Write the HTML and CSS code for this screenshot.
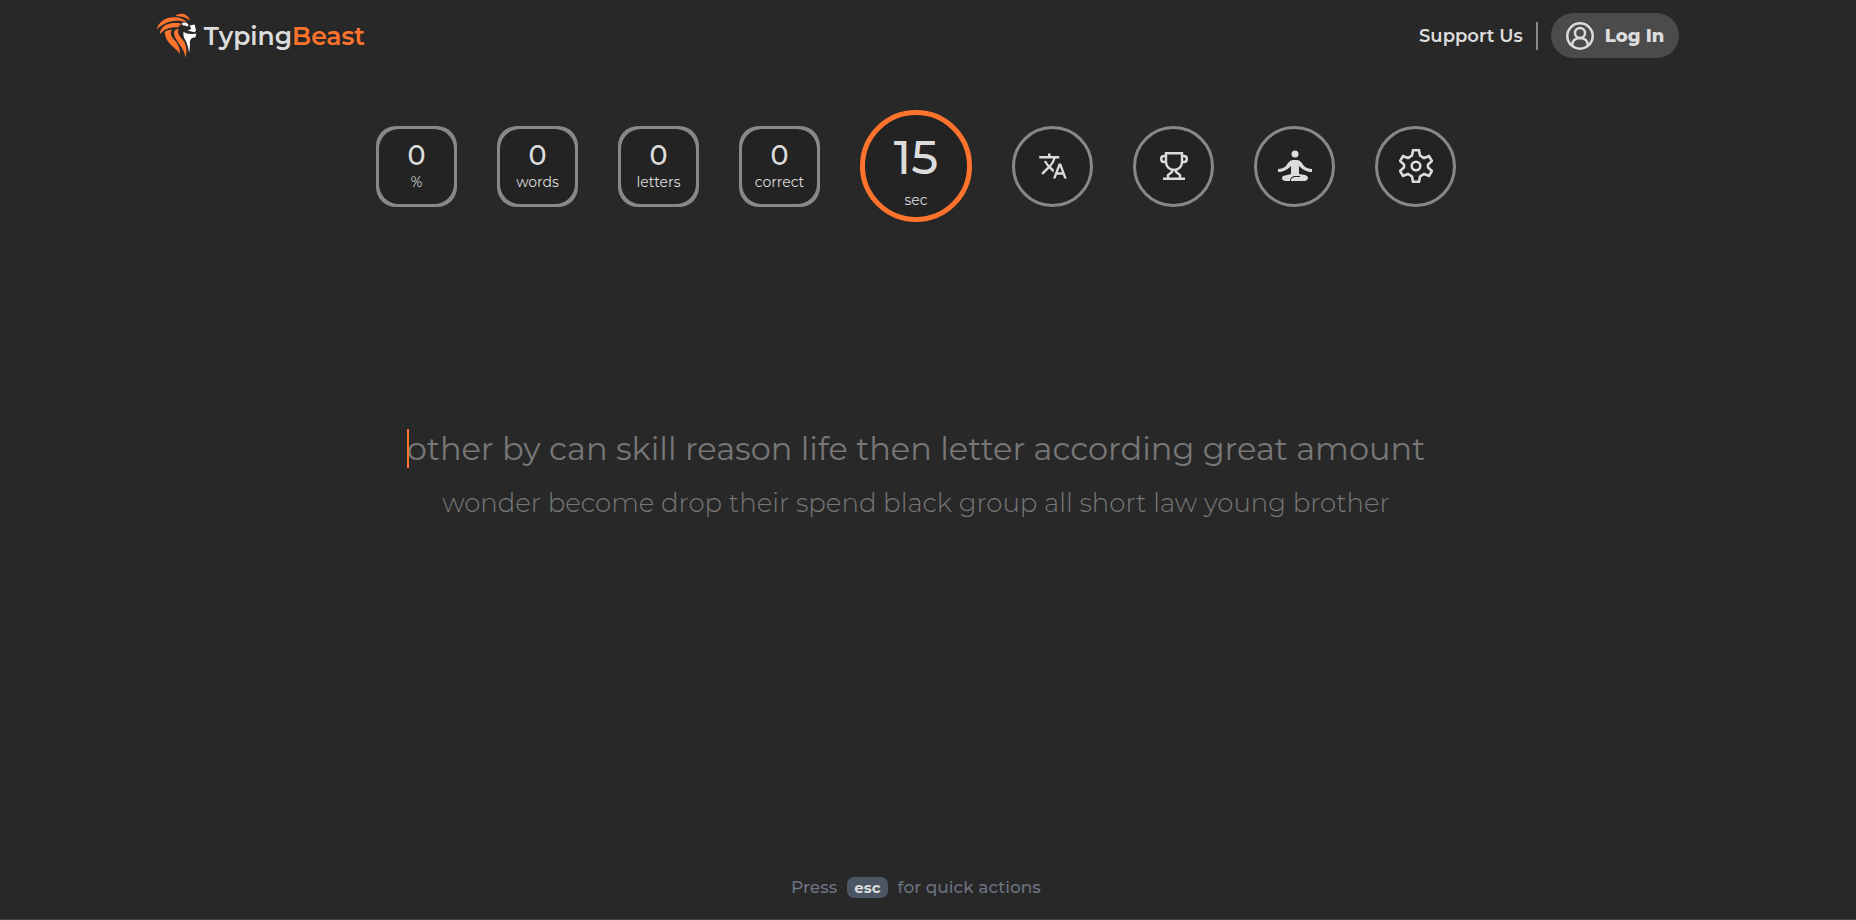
FILE: index.html
```html
<!DOCTYPE html>
<html lang="en">

<head>
  <meta charset="UTF-8">
  <meta name="viewport" content="width=device-width, initial-scale=1">
  <title>TypingBeast</title>
  <link rel="stylesheet" href="styles.css">
</head>

<body>

  <header class="header">
    <a class="logo" href="#">
      <svg class="logo-icon" viewBox="16 18 122 136" aria-hidden="true">
        <g fill="#ff732d">
          <path d="M73 28C86 17 110 18 117 42C105 32 91 28 73 28Z"/>
          <path d="M18 68C25 43 49 29 75 32C91 33 102 39 107 47C83 38 47 39 18 68Z"/>
          <path d="M27 82C29 61 47 50 68 49C78 48 87 48 94 52C88 53 84 57 82 62C60 60 44 65 27 82Z"/>
          <path d="M42 76C48 70 56 68 64 69C57 76 60 86 67 95C77 107 88 116 87 142C80 122 45 114 42 76Z"/>
          <path d="M69 76C72 70 77 67 83 66C79 76 83 84 91 94C103 106 111 122 104 153C102 122 71 104 69 76Z"/>
        </g>
        <g fill="#fff">
          <path d="M94 48L106 47L113 54L109 60C105 56 99 59 94 54Z"/>
          <path d="M116 56L131 53L135 71L131 76L121 74L110 71L121 67Z"/>
          <path d="M98 75C107 82 119 83 136 80L133 92C122 91 115 98 117 112L115 138C112 125 110 112 105 103C101 96 96 88 98 75Z"/>
        </g>
      </svg>
      <span class="logo-text">Typing<span class="accent">Beast</span></span>
    </a>

    <nav class="nav">
      <a class="support" href="#">Support Us</a>
      <span class="divider"></span>
      <button class="login" type="button">
        <svg class="login-icon" viewBox="0 0 28 28" fill="none" stroke="currentColor" stroke-width="2.500" aria-hidden="true">
          <circle cx="14" cy="14" r="12.700"/>
          <circle cx="14" cy="11" r="5"/>
          <path d="M6 24C6 19 9 16 14 16S22 19 22 24"/>
        </svg>
        Log In
      </button>
    </nav>
  </header>

  <main class="main">
    <section class="toolbar">
      <div class="stat"><div class="stat-box"><span class="value">0</span><span class="label">%</span></div></div>
      <div class="stat"><div class="stat-box"><span class="value">0</span><span class="label">words</span></div></div>
      <div class="stat"><div class="stat-box"><span class="value">0</span><span class="label">letters</span></div></div>
      <div class="stat"><div class="stat-box"><span class="value">0</span><span class="label">correct</span></div></div>

      <button class="timer" type="button"><span class="time">15</span><span class="unit">sec</span></button>

      <button class="round" type="button" aria-label="Language">
        <svg width="30" height="30" viewBox="0 0 24 24" fill="currentColor">
          <path d="M12.87 15.07l-2.54-2.51.03-.03A17.52 17.52 0 0 0 14.07 6H17V4h-7V2H8v2H1v2h11.17C11.5 7.92 10.44 9.75 9 11.35 8.07 10.32 7.3 9.19 6.69 8h-2c.73 1.63 1.73 3.17 2.98 4.56l-5.09 5.02L4 19l5-5 3.11 3.11.76-2.04zM18.5 10h-2L12 22h2l1.12-3h4.75L21 22h2l-4.5-12zm-2.62 7l1.62-4.33L19.12 17h-3.24z"/>
        </svg>
      </button>
      <button class="round" type="button" aria-label="Leaderboard">
        <svg width="28" height="28" viewBox="0 0 28 28" fill="none" stroke="currentColor" stroke-width="2.400">
          <path d="M6 1.200H22V10C22 15 18 18 14 18S6 15 6 10Z"/>
          <path d="M6 4H4C2 4 1.200 5 1.200 7S2 10 4 10H6M22 4H24C26 4 26.800 5 26.800 7S26 10 24 10H22"/>
          <path d="M12 18V20L8 23V27M16 18V20L20 23V27M3 26.800H25"/>
        </svg>
      </button>
      <button class="round" type="button" aria-label="Zen mode">
        <svg width="34" height="32" viewBox="0 0 34 32" fill="currentColor">
          <circle cx="17" cy="4" r="3.500"/>
          <path d="M15 10H19C22 10 24 13 26 16C28 18 31 19 34 19V22C29 22 25 20 21 16V24L27 25C30 26 31 28 29 30C28 31 27 31 25 31H13C13 28 15 27 18 27H22V26H18C14 26 12 28 12 31H8C4 31 3 28 5 26L13 24V16C9 20 5 22 0 22V19C3 19 6 18 8 16C10 13 12 10 15 10Z"/>
        </svg>
      </button>
      <button class="round" type="button" aria-label="Settings">
        <svg width="34" height="34" viewBox="0 0 34 34" fill="none" stroke="currentColor" stroke-width="2.600">
          <path d="M14 1.300H20L21 6.500L25 9L30 7L33 12L29 15.500V18.500L33 22L30 27L25 25L21 27.500L20 32.700H14L13 27.500L9 25L4 27L1 22L5 18.500V15.500L1 12L4 7L9 9L13 6.500Z"/>
          <circle cx="17" cy="17" r="4.300"/>
        </svg>
      </button>
    </section>

    <section class="words">
      <p class="line current"><span class="caret"></span>other by can skill reason life then letter according great amount</p>
      <p class="line next">wonder become drop their spend black group all short law young brother</p>
    </section>
  </main>

  <footer class="hint">Press <kbd>esc</kbd> for quick actions</footer>

</body>

</html>
```

FILE: styles.css
```css
* {
  margin: 0;
  padding: 0;
  box-sizing: border-box;
}

body {
  min-height: 100vh;
  padding-right: 24px;
  display: flex;
  flex-direction: column;
  border-bottom: 1px solid #444;
  background: #282828;
  color: #dcdcdc;
  font-family: Montserrat, Inter, sans-serif;
}

a {
  color: inherit;
  text-decoration: none;
}

button {
  border: none;
  color: inherit;
  font-family: inherit;
  cursor: pointer;
}

.header {
  display: flex;
  justify-content: space-between;
  align-items: center;
  padding: 12px 8.333% 0 8.5%;
}

.logo {
  display: flex;
  align-items: center;
  gap: 7px;
}

.logo-icon {
  width: 41px;
  height: 47px;
}

.logo-text {
  font-size: 25px;
  font-weight: 600;
  line-height: 32px;
}

.accent {
  color: #ff732d;
}

.nav {
  display: flex;
  align-items: center;
  gap: 13px;
}

.support {
  font-size: 18px;
  font-weight: 600;
}

.divider {
  width: 2px;
  height: 28px;
  background: #888;
}

.login {
  display: flex;
  align-items: center;
  gap: 11px;
  height: 45px;
  padding: 0 15px;
  border-radius: 24px;
  background: #4b4b4b;
  font-size: 18px;
  font-weight: 800;
}

.login-icon {
  width: 28px;
  height: 28px;
}

.main {
  flex: 1;
}

.toolbar {
  display: flex;
  justify-content: center;
  align-items: center;
  gap: 40px;
  margin-top: 51px;
}

.stat-box,
.round,
.timer {
  display: flex;
  flex-direction: column;
  align-items: center;
  justify-content: center;
  background: #232323;
}

.stat,
.round {
  width: 81px;
  height: 81px;
}

.stat {
  padding: 3px;
  border-radius: 20px;
  background: #888;
}

.stat-box {
  height: 100%;
  border-radius: 20px;
}

.round {
  border: 3px solid #888;
  border-radius: 50%;
}

.timer {
  width: 112px;
  height: 112px;
  border: 5px solid #ff732d;
  border-radius: 50%;
}

.value {
  font-size: 27px;
  font-weight: 500;
  line-height: 32px;
}

.label {
  font-size: 14px;
  line-height: 20px;
}

.time {
  padding-top: 8px;
  font-size: 47px;
  font-weight: 500;
  line-height: 56px;
}

.unit {
  margin-top: 4px;
  font-size: 14px;
  line-height: 20px;
}

.words {
  margin-top: 203px;
  text-align: center;
}

.line {
  color: #777;
}

.current {
  position: relative;
  width: fit-content;
  margin: 0 auto;
  font-size: 32px;
  line-height: 48px;
}

.caret {
  position: absolute;
  top: 4px;
  left: 0;
  width: 2px;
  height: 39px;
  background: #ff732d;
}

.next {
  margin-top: 6px;
  font-size: 26px;
  font-weight: 300;
  line-height: 48px;
}

.hint {
  display: flex;
  justify-content: center;
  align-items: center;
  gap: 10px;
  padding-bottom: 21px;
  color: #6b7280;
  font-size: 17px;
  font-weight: 500;
  line-height: 22px;
}

kbd {
  padding: 0 7px;
  border-radius: 7px;
  background: #4b5563;
  color: #dcdcdc;
  font-family: inherit;
  font-size: 15px;
  font-weight: 700;
  line-height: 21px;
}
```
